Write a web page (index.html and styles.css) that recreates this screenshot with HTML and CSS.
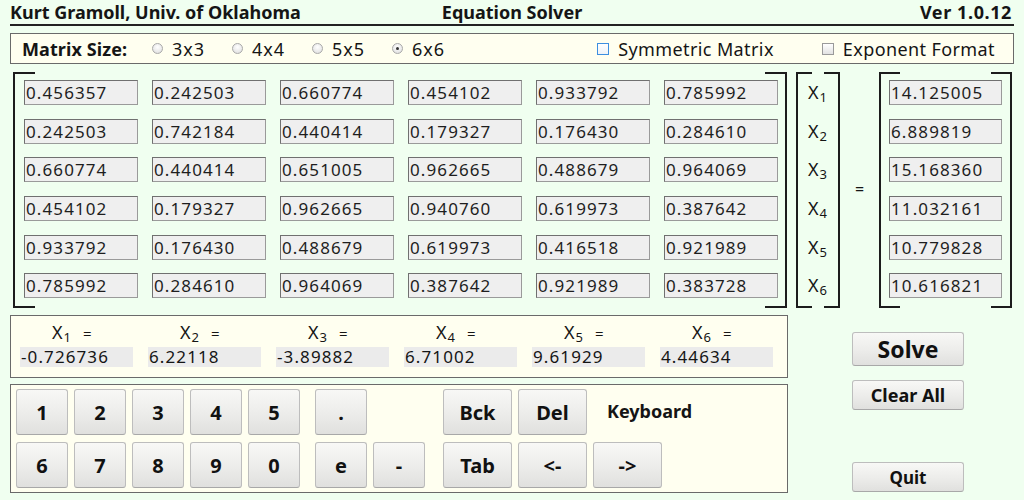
FILE: index.html
```html
<!DOCTYPE html>
<html>
<head>
<meta charset="utf-8">
<link rel="stylesheet" href="styles.css">
</head>
<body>
<div class="app">
  <header class="title-bar">
    <span class="title-left">Kurt Gramoll, Univ. of Oklahoma</span>
    <span class="title-center">Equation Solver</span>
    <span class="title-right">Ver 1.0.12</span>
  </header>

  <div class="panel options">
    <span class="opt-label">Matrix Size:</span>
    <span class="radio"><i class="radio-mark"></i>3x3</span>
    <span class="radio"><i class="radio-mark"></i>4x4</span>
    <span class="radio"><i class="radio-mark"></i>5x5</span>
    <span class="radio"><i class="radio-mark on"></i>6x6</span>
    <span class="check first"><i class="check-mark focus"></i>Symmetric Matrix</span>
    <span class="check"><i class="check-mark"></i>Exponent Format</span>
  </div>

  <div class="system">
    <div class="bracket matrix">
      <div class="cell">0.456357</div><div class="cell">0.242503</div><div class="cell">0.660774</div><div class="cell">0.454102</div><div class="cell">0.933792</div><div class="cell">0.785992</div>
      <div class="cell">0.242503</div><div class="cell">0.742184</div><div class="cell">0.440414</div><div class="cell">0.179327</div><div class="cell">0.176430</div><div class="cell">0.284610</div>
      <div class="cell">0.660774</div><div class="cell">0.440414</div><div class="cell">0.651005</div><div class="cell">0.962665</div><div class="cell">0.488679</div><div class="cell">0.964069</div>
      <div class="cell">0.454102</div><div class="cell">0.179327</div><div class="cell">0.962665</div><div class="cell">0.940760</div><div class="cell">0.619973</div><div class="cell">0.387642</div>
      <div class="cell">0.933792</div><div class="cell">0.176430</div><div class="cell">0.488679</div><div class="cell">0.619973</div><div class="cell">0.416518</div><div class="cell">0.921989</div>
      <div class="cell">0.785992</div><div class="cell">0.284610</div><div class="cell">0.964069</div><div class="cell">0.387642</div><div class="cell">0.921989</div><div class="cell">0.383728</div>
    </div>
    <div class="bracket xvec">
      <div class="xlabel">X<sub>1</sub></div>
      <div class="xlabel">X<sub>2</sub></div>
      <div class="xlabel">X<sub>3</sub></div>
      <div class="xlabel">X<sub>4</sub></div>
      <div class="xlabel">X<sub>5</sub></div>
      <div class="xlabel">X<sub>6</sub></div>
    </div>
    <div class="equals">=</div>
    <div class="bracket bvec">
      <div class="cell">14.125005</div>
      <div class="cell">6.889819</div>
      <div class="cell">15.168360</div>
      <div class="cell">11.032161</div>
      <div class="cell">10.779828</div>
      <div class="cell">10.616821</div>
    </div>
  </div>

  <div class="lower">
    <div class="left-col">
      <div class="panel solutions">
        <div class="sol"><div class="sol-label">X<sub>1</sub><span class="eq">=</span></div><div class="sol-value">-0.726736</div></div>
        <div class="sol"><div class="sol-label">X<sub>2</sub><span class="eq">=</span></div><div class="sol-value">6.22118</div></div>
        <div class="sol"><div class="sol-label">X<sub>3</sub><span class="eq">=</span></div><div class="sol-value">-3.89882</div></div>
        <div class="sol"><div class="sol-label">X<sub>4</sub><span class="eq">=</span></div><div class="sol-value">6.71002</div></div>
        <div class="sol"><div class="sol-label">X<sub>5</sub><span class="eq">=</span></div><div class="sol-value">9.61929</div></div>
        <div class="sol"><div class="sol-label">X<sub>6</sub><span class="eq">=</span></div><div class="sol-value">4.44634</div></div>
      </div>
      <div class="panel keyboard">
        <button class="key">1</button>
        <button class="key">2</button>
        <button class="key">3</button>
        <button class="key">4</button>
        <button class="key">5</button>
        <span class="spacer"></span>
        <button class="key">.</button>
        <span class="slot"></span>
        <span class="spacer"></span>
        <button class="key wide">Bck</button>
        <button class="key wide">Del</button>
        <span class="kb-label">Keyboard</span>

        <button class="key">6</button>
        <button class="key">7</button>
        <button class="key">8</button>
        <button class="key">9</button>
        <button class="key">0</button>
        <span class="spacer"></span>
        <button class="key">e</button>
        <button class="key">-</button>
        <span class="spacer"></span>
        <button class="key wide">Tab</button>
        <button class="key wide">&lt;-</button>
        <button class="key wide">-&gt;</button>
      </div>
    </div>
    <div class="actions">
      <button class="btn solve">Solve</button>
      <button class="btn clear">Clear All</button>
      <button class="btn quit">Quit</button>
    </div>
  </div>
</div>
</body>
</html>
```

FILE: styles.css
```css
* { box-sizing: border-box; }
html, body {
  margin: 0;
  padding: 0;
  background: #f0fff0;
}
body {
  font-family: "Noto Sans", Roboto, "Liberation Sans", sans-serif;
  color: #151515;
  width: 1024px;
  height: 500px;
  overflow: hidden;
}
.app {
  display: flex;
  flex-direction: column;
}

/* Title bar */
.title-bar {
  margin: 0 10px;
  height: 26px;
  border-bottom: 2px solid #222;
  display: grid;
  grid-template-columns: 1fr auto 1fr;
  align-items: center;
  font-weight: bold;
  font-size: 18px;
  line-height: 24px;
  padding-top: 0;
}
.title-left { justify-self: start; }
.title-center { justify-self: center; }
.title-right { justify-self: end; padding-right: 2px; letter-spacing: 0.6px; }

/* Panels */
.panel {
  background: #fffff0;
  border: 1px solid #6a6a6a;
}

/* Options bar */
.options {
  margin: 7px 10px 0;
  height: 31px;
  display: flex;
  align-items: center;
  padding: 0 18px 0 11px;
  font-size: 18px;
  letter-spacing: 0.4px;
}
.opt-label {
  font-weight: bold;
  width: 130px;
  letter-spacing: 0.1px;
}
.radio {
  width: 80px;
  display: flex;
  align-items: center;
  letter-spacing: 1px;
}
.radio-mark {
  width: 11px;
  height: 11px;
  border-radius: 50%;
  border: 1px solid #a9a9a9;
  background: radial-gradient(circle at 50% 35%, #ffffff 0%, #e6e6e6 70%, #d6d6d6 100%);
  margin-right: 9px;
  display: flex;
  align-items: center;
  justify-content: center;
}
.radio-mark.on::after {
  content: "";
  width: 3px;
  height: 3px;
  border-radius: 50%;
  background: #333;
}
.check {
  display: flex;
  align-items: center;
}
.check.first { margin-left: auto; margin-right: 48px; }
.check-mark {
  width: 12px;
  height: 12px;
  border: 1px solid #9a9a9a;
  background: linear-gradient(#ffffff, #e2e2e2);
  margin-right: 9px;
}
.check-mark.focus {
  border-color: #3d8fe0;
  background: linear-gradient(#ffffff, #eef3f8);
}

/* System of equations */
.system {
  margin: 8px 0 0 13px;
  height: 236px;
  display: flex;
}
.bracket {
  position: relative;
  height: 100%;
}
.bracket::before,
.bracket::after {
  content: "";
  position: absolute;
  top: 0;
  bottom: 0;
  width: var(--tick, 20px);
  border: 2px solid #1c1c1c;
}
.bracket::before { left: 0; border-right: 0; }
.bracket::after { right: 0; border-left: 0; }

.matrix {
  width: 774px;
  padding: 8px 0 0 11px;
  display: grid;
  grid-template-columns: repeat(6, 114px);
  grid-auto-rows: 25px;
  column-gap: 14px;
  row-gap: 13.7px;
}
.cell {
  height: 25px;
  background: #efefef;
  border: 1px solid #707070;
  border-right-color: #9a9a9a;
  border-bottom-color: #9a9a9a;
  font-size: 17px;
  line-height: 23px;
  letter-spacing: 1.1px;
  padding-left: 1px;
  color: #1e1e1e;
  white-space: nowrap;
  overflow: hidden;
}

.xvec {
  --tick: 14px;
  margin-left: 9px;
  width: 44px;
  padding: 8px 0 0 12px;
  display: grid;
  grid-auto-rows: 25px;
  row-gap: 13.7px;
}
.xlabel {
  font-size: 18px;
  line-height: 25px;
}
sub {
  font-size: 13px;
  vertical-align: baseline;
  position: relative;
  top: 3px;
  margin-left: 1px;
}
.equals {
  width: 39px;
  display: flex;
  align-items: center;
  justify-content: center;
  font-size: 16px;
  padding-bottom: 2px;
}
.bvec {
  --tick: 19px;
  width: 133px;
  padding: 8px 0 0 10px;
  display: grid;
  grid-template-columns: 113px;
  grid-auto-rows: 25px;
  row-gap: 13.7px;
}

/* Lower area */
.lower {
  margin: 7px 0 0 10px;
  display: flex;
}
.left-col {
  width: 778px;
  display: flex;
  flex-direction: column;
  gap: 6px;
}
.solutions {
  height: 63px;
  display: grid;
  grid-template-columns: repeat(6, 113px);
  column-gap: 15px;
  padding: 5px 0 0 9px;
}
.sol-label {
  height: 22px;
  line-height: 22px;
  font-size: 18px;
  padding-left: 32px;
  margin-bottom: 4px;
}
.sol-label .eq {
  font-size: 15px;
  margin-left: 12px;
}
.sol-value {
  height: 20px;
  line-height: 20px;
  background: #ebebeb;
  font-size: 17px;
  letter-spacing: 1.1px;
  padding-left: 1px;
  white-space: nowrap;
}

/* Keyboard */
.keyboard {
  height: 109px;
  padding: 4px 0 0 5px;
  display: grid;
  grid-template-columns: 52px 52px 52px 52px 52px 3px 52px 52px 6px 69px 69px 69px;
  grid-template-rows: 46px 46px;
  column-gap: 6px;
  row-gap: 7px;
}
.key, .btn {
  font-family: "Noto Sans", Roboto, "Liberation Sans", sans-serif;
  font-weight: bold;
  color: #111;
  background: linear-gradient(#f8f8f6 0%, #ececea 55%, #e0e0de 100%);
  border: 1px solid #bdbdbd;
  border-bottom-color: #a8a8a8;
  border-radius: 3px;
  padding: 0;
  margin: 0;
}
.key {
  font-size: 20px;
  height: 46px;
}
.kb-label {
  grid-column: 12 / span 2;
  font-weight: bold;
  font-size: 18px;
  align-self: center;
  padding-left: 14px;
  white-space: nowrap;
  padding-bottom: 2px;
}

/* Action buttons */
.actions {
  margin-left: 64px;
  padding-top: 17px;
  display: flex;
  flex-direction: column;
  width: 112px;
}
.btn {
  width: 112px;
  height: 30px;
  font-size: 18px;
}
.btn.solve {
  height: 34px;
  font-size: 23px;
  margin-bottom: 14px;
}
.btn.quit {
  margin-top: 52px;
  font-size: 17px;
}
```
